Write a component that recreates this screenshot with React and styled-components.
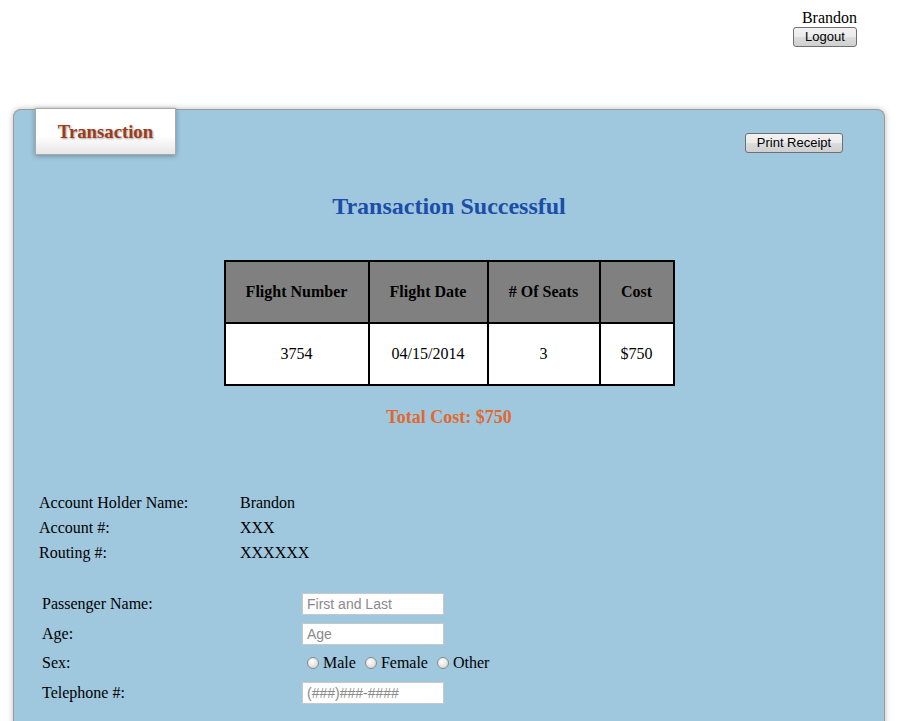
import React from 'react';
import styled, { createGlobalStyle } from 'styled-components';

const GlobalStyle = createGlobalStyle`
  body {
    margin: 8px 0 0 0;
    font-family: "Liberation Serif", "Times New Roman", serif;
    font-size: 16px;
    color: #000;
    background: #fff;
  }
`;

const Header = styled.div`
  display: flex;
  justify-content: flex-end;
  padding-right: 43px;
  height: 40px;
`;

const UserBox = styled.div`
  display: flex;
  flex-direction: column;
  align-items: center;
  line-height: 19px;
`;

const UserName = styled.span`
  margin-left: 9px;
`;

const WinButton = styled.button`
  font-family: "Liberation Sans", Arial, sans-serif;
  font-size: 13px;
  color: #000;
  height: 20px;
  padding: 0 ${(p) => p.$pad || 10}px;
  border: 1px solid #707070;
  border-radius: 3px;
  background: linear-gradient(#f2f2f2 0%, #ebebeb 50%, #dddddd 51%, #cfcfcf 100%);
  cursor: pointer;
  line-height: 16px;
`;

const Panel = styled.div`
  margin: 61px 15px 0 13px;
  background: #9fc7de;
  border: 1px solid #9a9a9a;
  border-bottom: none;
  border-radius: 8px 8px 0 0;
  box-shadow: 0 0 6px rgba(0, 0, 0, 0.25);
  min-height: 620px;
`;

const TopRow = styled.div`
  display: flex;
  justify-content: space-between;
  align-items: flex-start;
  padding: 0 41px 0 21px;
`;

const Tab = styled.div`
  margin-top: -2px;
  width: 139px;
  height: 45px;
  display: flex;
  align-items: center;
  justify-content: center;
  background: linear-gradient(#ffffff 0%, #ffffff 60%, #e6e6e6 100%);
  border: 1px solid #a9a9a9;
  box-shadow: 0 1px 5px rgba(0, 0, 0, 0.3);
  font-size: 18.72px;
  font-weight: bold;
  color: #9b3b1c;
  text-shadow: 1px 1px 2px rgba(0, 0, 0, 0.35);
`;

const PrintButton = styled(WinButton)`
  margin-top: 23px;
  width: 98px;
  padding: 0;
`;

const Title = styled.h2`
  margin: 37px 0 0;
  text-align: center;
  font-size: 24px;
  line-height: 28px;
  color: #1b4ea8;
`;

const Table = styled.table`
  margin: 40px auto 0;
  border-collapse: collapse;
  border: 2px solid #000;
  text-align: center;
`;

const Th = styled.th`
  background: #808080;
  border: 2px solid #000;
  height: 60px;
  width: ${(p) => p.$w}px;
  padding: 0;
  font-size: 16px;
`;

const Td = styled.td`
  background: #fff;
  border: 2px solid #000;
  height: 60px;
  padding: 0;
`;

const Total = styled.h3`
  margin: 20px 0 0;
  text-align: center;
  font-size: 18px;
  line-height: 22px;
  color: #e0692f;
`;

const InfoGrid = styled.div`
  display: grid;
  grid-template-columns: 201px auto;
  margin: 62px 0 0 25px;
  line-height: 25px;
`;

const FormGrid = styled.div`
  display: grid;
  grid-template-columns: 260px auto;
  row-gap: 7.5px;
  margin: 28px 0 0 28px;
  align-items: center;
`;

const Label = styled.div`
  line-height: 22px;
`;

const TextInput = styled.input`
  box-sizing: border-box;
  width: 142px;
  height: 22px;
  border: 1px solid #c8c8c8;
  padding: 0 4px;
  font-family: "Liberation Sans", Arial, sans-serif;
  font-size: 14px;
  background: #fff;
  &::placeholder {
    color: #8a8a8a;
  }
`;

const RadioGroup = styled.div`
  display: flex;
  align-items: center;
  padding-left: 5px;
  line-height: 22px;
`;

const RadioLabel = styled.label`
  display: flex;
  align-items: center;
  margin-right: 9px;
`;

const Radio = styled.input`
  appearance: none;
  width: 12px;
  height: 12px;
  margin: 0 4px 0 0;
  border-radius: 50%;
  border: 1px solid #8a8a8a;
  background: radial-gradient(circle at 40% 35%, #ffffff 0%, #e4e4e4 55%, #c6c6c6 100%);
`;

const columns = [
  { name: 'Flight Number', w: 142 },
  { name: 'Flight Date', w: 117 },
  { name: '# Of Seats', w: 110 },
  { name: 'Cost', w: 72 },
];

const row = ['3754', '04/15/2014', '3', '$750'];

export default function App() {
  return (
    <>
      <GlobalStyle />
      <Header>
        <UserBox>
          <UserName>Brandon</UserName>
          <WinButton $pad={11}>Logout</WinButton>
        </UserBox>
      </Header>
      <Panel>
        <TopRow>
          <Tab>Transaction</Tab>
          <PrintButton>Print Receipt</PrintButton>
        </TopRow>
        <Title>Transaction Successful</Title>
        <Table>
          <thead>
            <tr>
              {columns.map((c) => (
                <Th key={c.name} $w={c.w}>{c.name}</Th>
              ))}
            </tr>
          </thead>
          <tbody>
            <tr>
              {row.map((v, i) => (
                <Td key={i}>{v}</Td>
              ))}
            </tr>
          </tbody>
        </Table>
        <Total>Total Cost: $750</Total>
        <InfoGrid>
          <div>Account Holder Name:</div>
          <div>Brandon</div>
          <div>Account #:</div>
          <div>XXX</div>
          <div>Routing #:</div>
          <div>XXXXXX</div>
        </InfoGrid>
        <FormGrid>
          <Label>Passenger Name:</Label>
          <div><TextInput placeholder="First and Last" /></div>
          <Label>Age:</Label>
          <div><TextInput placeholder="Age" /></div>
          <Label>Sex:</Label>
          <RadioGroup>
            <RadioLabel><Radio type="radio" name="sex" />Male</RadioLabel>
            <RadioLabel><Radio type="radio" name="sex" />Female</RadioLabel>
            <RadioLabel><Radio type="radio" name="sex" />Other</RadioLabel>
          </RadioGroup>
          <Label>Telephone #:</Label>
          <div><TextInput placeholder="(###)###-####" /></div>
        </FormGrid>
      </Panel>
    </>
  );
}
